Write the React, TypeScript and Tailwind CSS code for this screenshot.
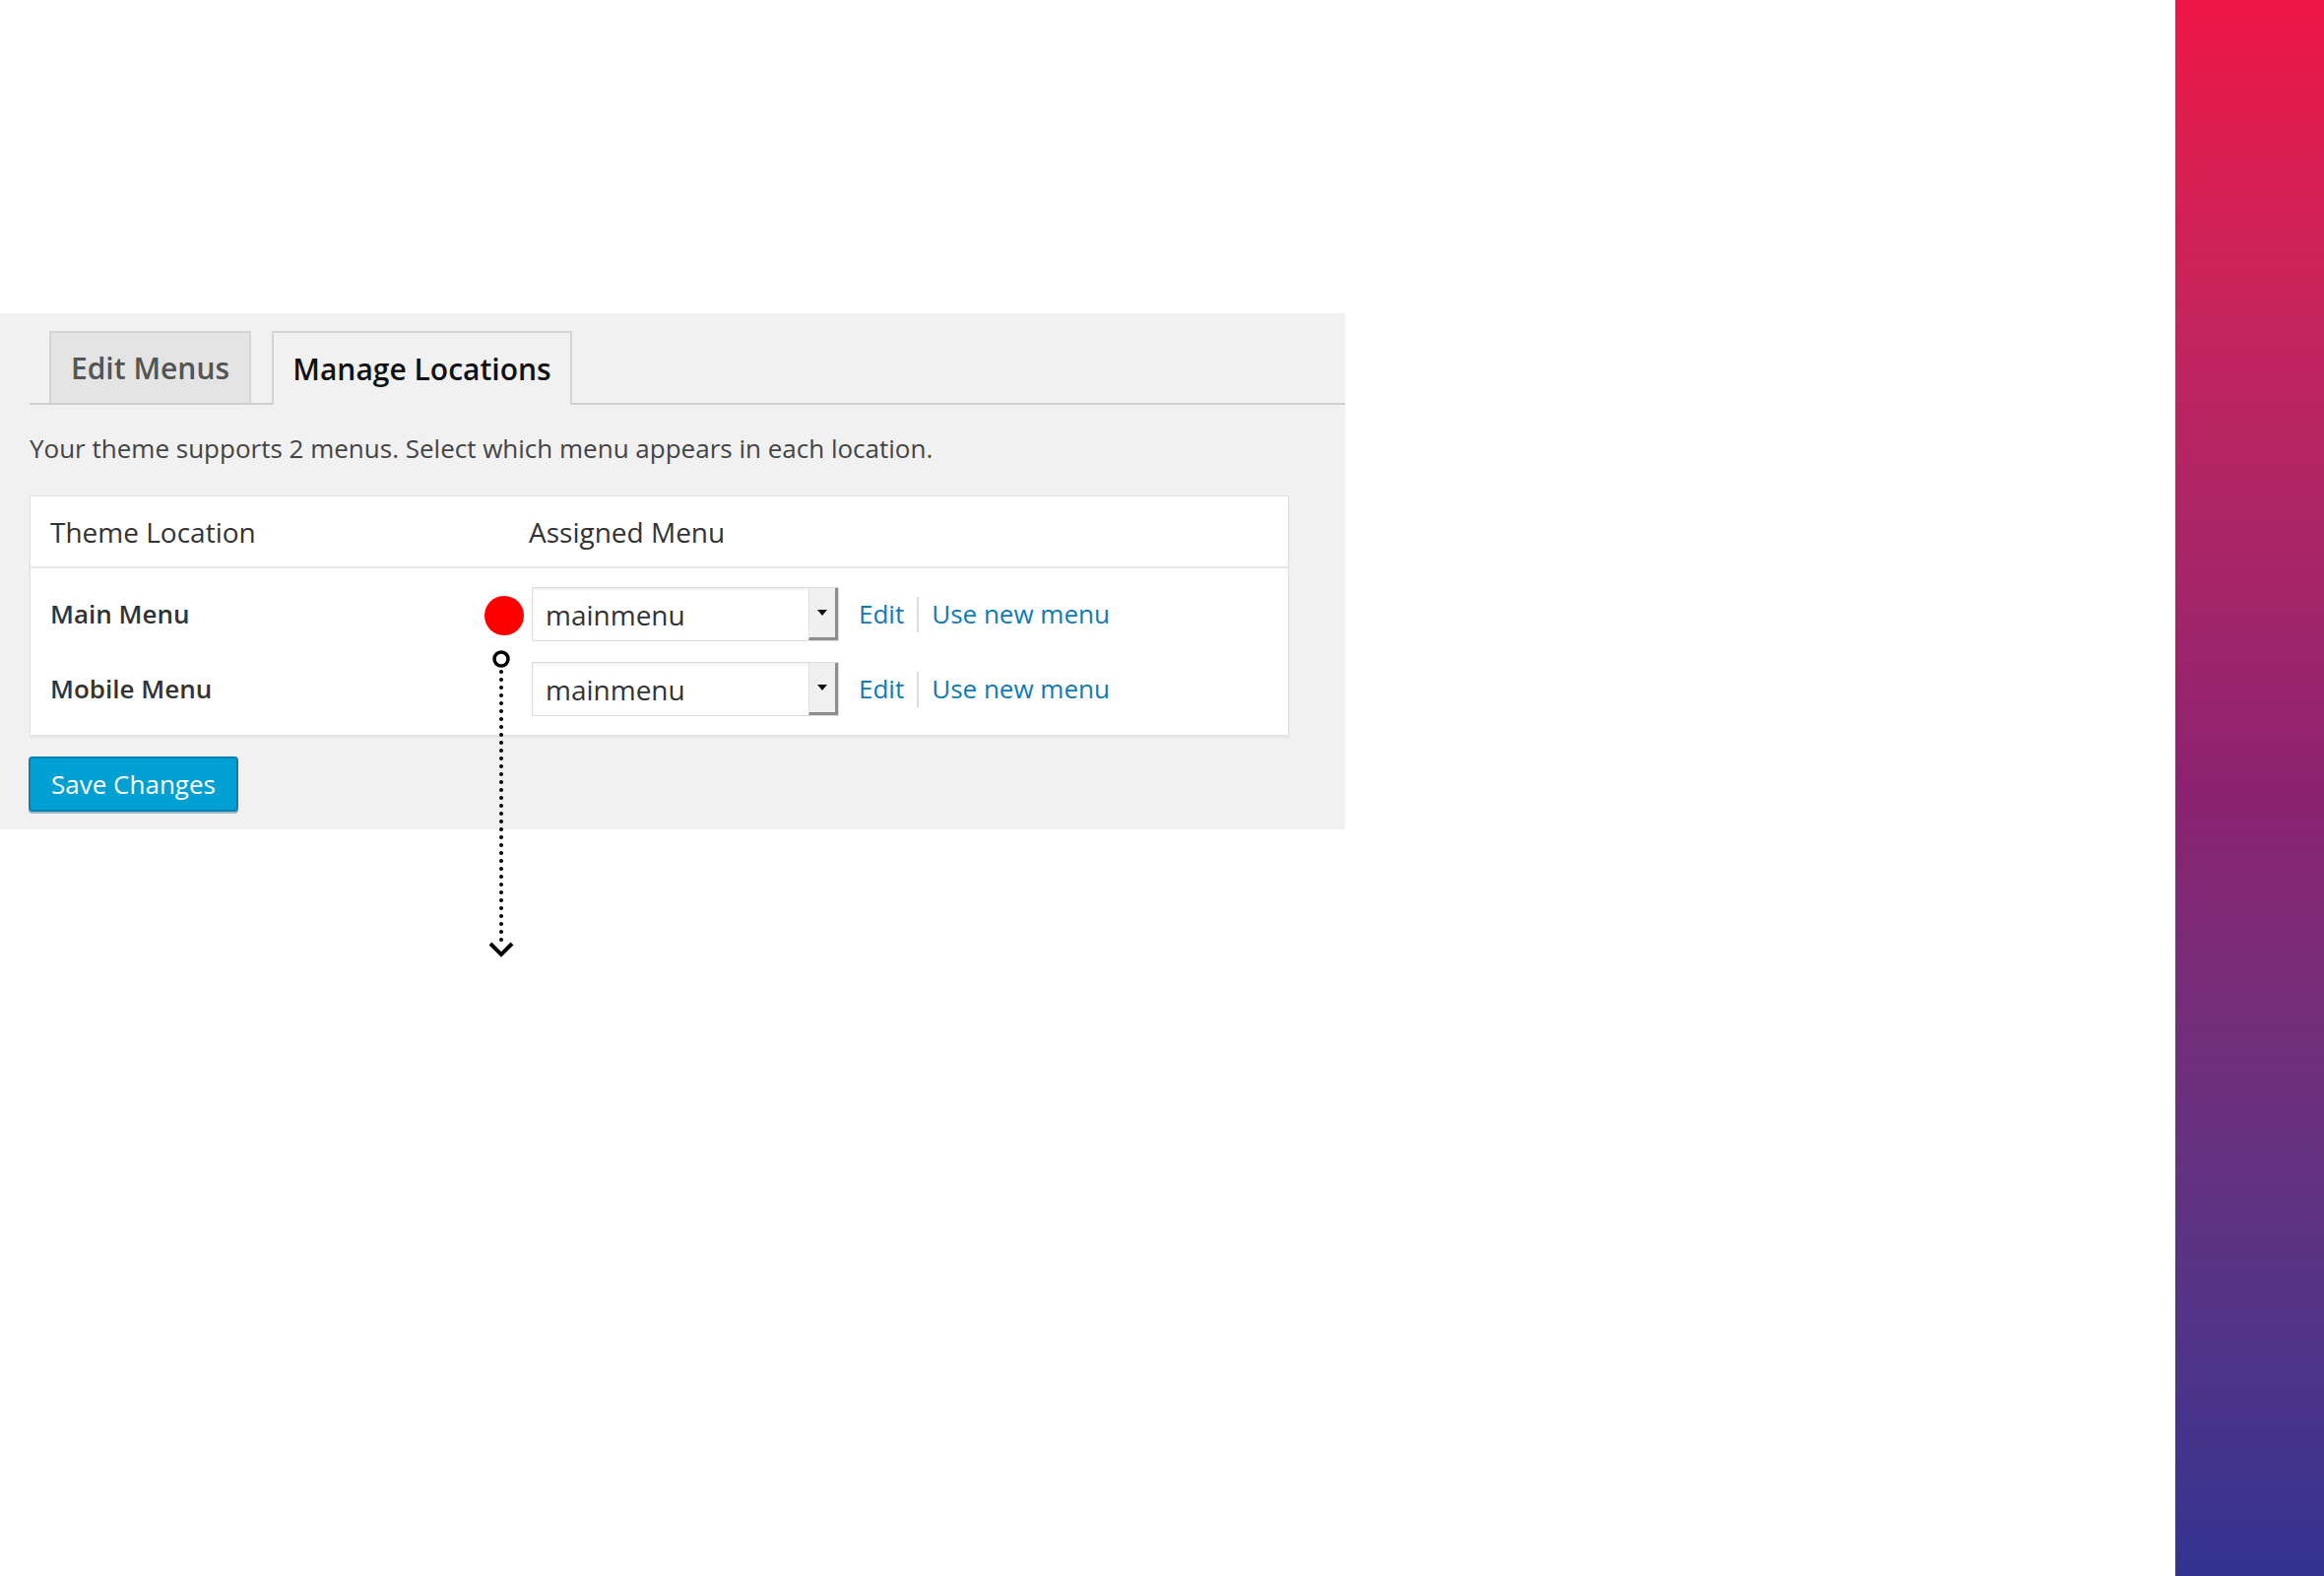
import React from "react";

const font = "font-['Open_Sans','Liberation_Sans',sans-serif]";

const rows = [
  { label: "Main Menu", value: "mainmenu" },
  { label: "Mobile Menu", value: "mainmenu" },
];

const SelectBox = ({ value }: { value: string }) => (
  <div className="flex h-[55px] w-[312px] items-stretch border border-[#dcdcdc] bg-white shadow-[inset_0_2px_3px_rgba(0,0,0,0.06)]">
    <span className="flex flex-1 items-center pl-[13px] text-[28px] text-[#333]">{value}</span>
    <span className="flex w-[30px] items-center justify-center border-l border-[#e2e2e2] border-r-[3px] border-b-[3px] border-r-[#8e8e8e] border-b-[#8e8e8e] bg-[#f0f0f0]">
      <svg width="10" height="6" viewBox="0 0 10 6">
        <path d="M0 0 L10 0 L5 6 Z" fill="#111" />
      </svg>
    </span>
  </div>
);

const App = () => {
  return (
    <div className={`flex h-[1600px] w-[2360px] bg-white ${font}`}>
      <div className="relative flex-1">
        <div className="mt-[318px] w-[1366px] bg-[#f1f1f1] pt-[19px] pb-[18px]">
          {/* tabs */}
          <div className="ml-[30px] flex h-[74px] items-end gap-[21px] border-b-2 border-[#d0d0d0] pl-[20px]">
            <div className="flex h-[73px] w-[205px] items-center justify-center border-2 border-b-0 border-[#d4d4d4] bg-[#e4e4e4] text-[30px] font-semibold text-[#555]">
              Edit Menus
            </div>
            <div className="-mb-[2px] flex h-[75px] w-[305px] items-center justify-center border-2 border-b-0 border-[#d4d4d4] bg-[#f1f1f1] text-[30px] font-semibold text-[#111]">
              Manage Locations
            </div>
          </div>

          <p className="mt-[24px] ml-[30px] text-[26px] leading-[40px] text-[#444]">
            Your theme supports 2 menus. Select which menu appears in each location.
          </p>

          {/* locations table */}
          <div className="mt-[28px] ml-[30px] w-[1279px] border border-[#e3e3e3] bg-white shadow-[0_2px_2px_rgba(0,0,0,0.05)]">
            <div className="flex h-[73px] items-center border-b-2 border-[#e6e6e6] text-[28px] text-[#333]">
              <span className="w-[506px] pl-[20px]">Theme Location</span>
              <span>Assigned Menu</span>
            </div>
            <div className="flex flex-col gap-[21px] pt-[19px] pb-[19px]">
              {rows.map((row) => (
                <div key={row.label} className="flex h-[55px] items-center">
                  <span className="w-[509px] pl-[20px] text-[26px] font-semibold text-[#333]">{row.label}</span>
                  <SelectBox value={row.value} />
                  <a className="ml-[20px] text-[26px] text-[#0e7bb5]">Edit</a>
                  <span className="mx-[13px] h-[36px] w-[2px] bg-[#dedede]" />
                  <a className="text-[26px] text-[#0e7bb5]">Use new menu</a>
                </div>
              ))}
            </div>
          </div>

          <button className="mt-[21px] ml-[29px] flex h-[56px] w-[213px] items-center justify-center rounded-[4px] border-2 border-[#0a7fb0] bg-[#00a0d2] text-[26px] text-white shadow-[0_2px_0_rgba(0,80,120,0.35)]">
            Save Changes
          </button>
        </div>

        {/* annotation over the first row */}
        <div className="absolute left-[492px] top-[605px] h-[40px] w-[40px] rounded-full bg-[#ff0000]" />
        <svg className="absolute left-[495px] top-[655px]" width="30" height="320" viewBox="0 0 30 320">
          <circle cx="14" cy="14" r="7" fill="none" stroke="#000" strokeWidth="3.5" />
          <line x1="14" y1="27" x2="14" y2="306" stroke="#000" strokeWidth="4" strokeLinecap="round" strokeDasharray="0 8" />
          <path d="M3 303 L14 314 L25 303" fill="none" stroke="#000" strokeWidth="4" />
        </svg>
      </div>
      <div className="h-full w-[151px] bg-linear-to-b from-[#ee1646] via-[#8c2270] to-[#333391]" />
    </div>
  );
};

export default App;
